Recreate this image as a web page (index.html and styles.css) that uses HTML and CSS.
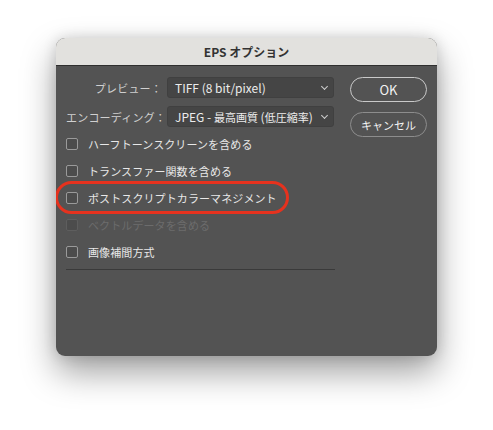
FILE: index.html
```html
<!DOCTYPE html>
<html lang="ja">
<head>
  <meta charset="UTF-8">
  <title>EPS オプション</title>
  <link rel="stylesheet" href="styles.css">
</head>
<body>
  <div class="dialog">
    <div class="titlebar">EPS オプション</div>

    <div class="content">
      <div class="form">
        <div class="field">
          <span class="label">プレビュー：</span>
          <div class="select">TIFF (8 bit/pixel)<span class="chevron"></span></div>
        </div>
        <div class="field">
          <span class="label">エンコーディング：</span>
          <div class="select">JPEG - <span class="cjk">最高画質</span> (<span class="cjk">低圧縮率</span>)<span class="chevron"></span></div>
        </div>

        <div class="checks">
          <div class="check"><span class="box"></span>ハーフトーンスクリーンを含める</div>
          <div class="check"><span class="box"></span>トランスファー関数を含める</div>
          <div class="check highlight"><span class="box"></span>ポストスクリプトカラーマネジメント</div>
          <div class="check disabled"><span class="box"></span>ベクトルデータを含める</div>
          <div class="check"><span class="box"></span>画像補間方式</div>
        </div>

        <div class="separator"></div>
      </div>

      <div class="buttons">
        <button class="btn btn-ok">OK</button>
        <button class="btn btn-cancel">キャンセル</button>
      </div>
    </div>
  </div>
</body>
</html>
```

FILE: styles.css
```css
html, body {
  margin: 0;
  padding: 0;
  background: #fff;
  font-family: "Noto Sans CJK JP", "Noto Sans", sans-serif;
}

body {
  min-height: 100vh;
  box-sizing: border-box;
  padding: 38px 0 0 56px;
}

.dialog {
  width: 381px;
  height: 318px;
  background-color: #535353;
  border-radius: 9px;
  overflow: hidden;
  box-shadow: 0 16px 34px rgba(0, 0, 0, 0.38), 0 0 14px rgba(0, 0, 0, 0.14);
}

.titlebar {
  height: 27px;
  line-height: 27px;
  background-color: #e2e1de;
  border-bottom: 1px solid #2f2f2f;
  text-align: center;
  font-size: 12px;
  font-weight: bold;
  color: #333;
}

.content {
  display: grid;
  grid-template-columns: 269px 77px;
  gap: 15px;
  padding: 11px 10px 0 10px;
}

.field {
  display: flex;
  align-items: center;
  margin-bottom: 8px;
}

.label {
  width: 96px;
  margin-right: 5px;
  text-align: right;
  font-size: 11px;
  color: #d0d0d0;
  letter-spacing: 0.2px;
  white-space: nowrap;
}

.select {
  position: relative;
  width: 167px;
  height: 21px;
  line-height: 20px;
  box-sizing: border-box;
  padding-left: 7px;
  background-color: #454545;
  border: 1px solid #404040;
  border-radius: 3px;
  font-size: 12px;
  color: #ececec;
  white-space: nowrap;
}

.select .cjk {
  font-size: 11px;
}

.chevron {
  position: absolute;
  right: 6px;
  top: 6px;
  width: 4px;
  height: 4px;
  border-right: 1px solid #cfcfcf;
  border-bottom: 1px solid #cfcfcf;
  transform: rotate(45deg);
}

.checks {
  margin-top: -5px;
}

.check {
  position: relative;
  display: flex;
  align-items: center;
  height: 27px;
  font-size: 11px;
  color: #e8e8e8;
  letter-spacing: 0.1px;
}

.box {
  width: 12px;
  height: 12px;
  box-sizing: border-box;
  margin-right: 10px;
  border: 1px solid #9a9a9a;
  border-radius: 2px;
  background-color: #4c4c4c;
}

.check.disabled {
  color: #6c6c6c;
}

.check.disabled .box {
  border-color: #5e5e5e;
}

.check.highlight::after {
  content: '';
  position: absolute;
  left: -11px;
  top: -3px;
  width: 234px;
  height: 33px;
  box-sizing: border-box;
  border: 3px solid #e6321e;
  border-radius: 17px;
}

.separator {
  margin-top: 4px;
  height: 1px;
  background-color: #3a3a3a;
}

.buttons {
  display: flex;
  flex-direction: column;
  gap: 10px;
}

.btn {
  width: 77px;
  height: 25px;
  padding: 0;
  background: transparent;
  border: 1px solid #c9c9c9;
  border-radius: 13px;
  font-family: inherit;
  font-size: 13px;
  color: #f2f2f2;
  cursor: pointer;
}

.btn-cancel {
  border-color: #8d8d8d;
  font-size: 11px;
}
```
